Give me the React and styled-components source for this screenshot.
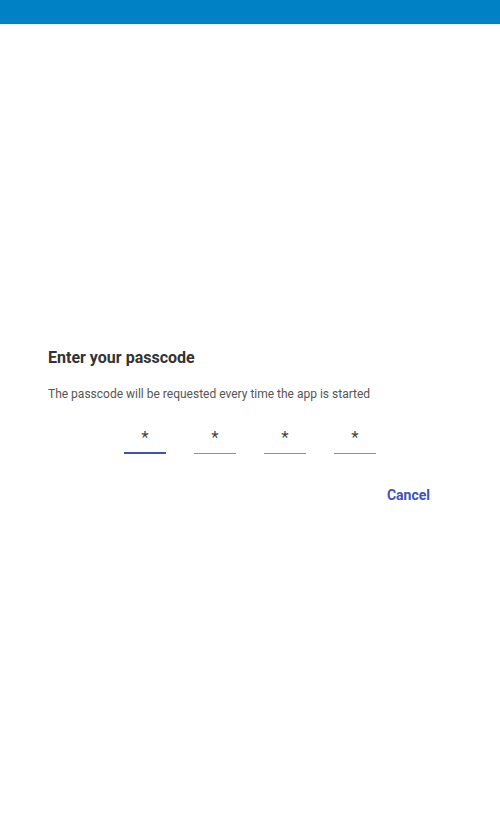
import React from "react";
import styled, { createGlobalStyle } from "styled-components";

const Global = createGlobalStyle`
  html, body { margin: 0; padding: 0; background: #fff; }
  body { font-family: Roboto, "Noto Sans", Arial, sans-serif; }
`;

const Page = styled.div`
  width: 500px;
  height: 833px;
  display: flex;
  flex-direction: column;
`;

const TopBar = styled.div`
  height: 24px;
  background: #0081c6;
  flex-shrink: 0;
`;

const Dialog = styled.div`
  margin-top: 324px;
  padding: 0 48px;
  display: flex;
  flex-direction: column;
`;

const Title = styled.h2`
  margin: 0;
  font-size: 16px;
  line-height: 19px;
  font-weight: 700;
  color: #333;
`;

const Subtitle = styled.p`
  margin: 20px 0 0;
  font-size: 12px;
  line-height: 14px;
  color: #555;
`;

const Inputs = styled.div`
  display: flex;
  justify-content: center;
  gap: 28px;
  margin-top: 22px;
`;

const Digit = styled.div`
  width: 42px;
  height: 31px;
  display: flex;
  align-items: flex-start;
  justify-content: center;
  padding-top: 4px;
  font-size: 17px;
  line-height: 20px;
  color: #444;
  box-sizing: border-box;
  border-bottom: ${(p) => (p.$active ? "2px solid #3f51b5" : "1px solid #8f8f97")};
`;

const Actions = styled.div`
  display: flex;
  justify-content: flex-end;
  margin-top: 33px;
  padding-right: 22px;
`;

const Cancel = styled.span`
  font-size: 14px;
  line-height: 16px;
  font-weight: 700;
  color: #3f51b5;
`;

export default function App() {
  return (
    <Page>
      <Global />
      <TopBar />
      <Dialog>
        <Title>Enter your passcode</Title>
        <Subtitle>The passcode will be requested every time the app is started</Subtitle>
        <Inputs>
          {[0, 1, 2, 3].map((i) => (
            <Digit key={i} $active={i === 0}>*</Digit>
          ))}
        </Inputs>
        <Actions>
          <Cancel>Cancel</Cancel>
        </Actions>
      </Dialog>
    </Page>
  );
}
